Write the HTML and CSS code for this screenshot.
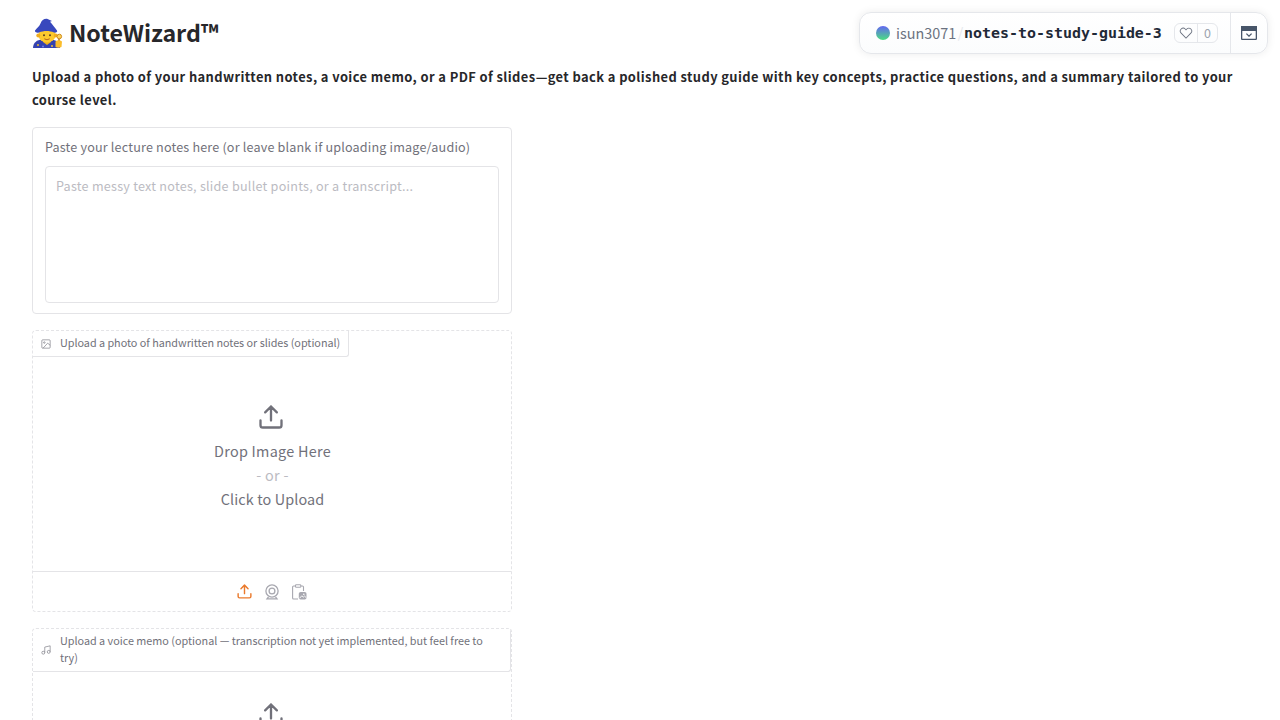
FILE: index.html
```
<!DOCTYPE html>
<html lang="en">
<head>
  <meta charset="utf-8">
  <title>NoteWizard</title>
  <link rel="stylesheet" href="styles.css">
</head>
<body>
  <svg width="0" height="0" class="defs">
    <symbol id="upload" viewBox="0 0 24 24">
      <path d="M21 15v4a2 2 0 0 1-2 2H5a2 2 0 0 1-2-2v-4M17 8l-5-5-5 5M12 3v12" fill="none" stroke="currentColor" stroke-width="2" stroke-linecap="round" stroke-linejoin="round"/>
    </symbol>
  </svg>

  <div class="space-bar">
    <div class="space-info">
      <span class="dot"></span>
      <span class="owner">isun3071</span>
      <span class="slash">/</span>
      <span class="repo">notes-to-study-guide-3</span>
      <div class="likes">
        <span class="heart">
          <svg width="14" height="14" viewBox="0 0 32 32" fill="#6b7280"><path d="M22.45,6a5.47,5.47,0,0,1,3.91,1.64,5.7,5.7,0,0,1,0,8L16,26.13,5.64,15.64a5.7,5.7,0,0,1,0-8,5.48,5.48,0,0,1,7.82,0L16,10.24l2.53-2.58A5.44,5.44,0,0,1,22.45,6m0-2a7.47,7.47,0,0,0-5.34,2.24L16,7.36,14.89,6.24a7.49,7.49,0,0,0-10.68,0,7.72,7.72,0,0,0,0,10.82L16,29,27.79,17.06a7.72,7.72,0,0,0,0-10.82A7.49,7.49,0,0,0,22.45,4Z"/></svg>
        </span>
        <span class="count">0</span>
      </div>
    </div>
    <div class="space-toggle">
      <svg width="16" height="14" viewBox="0 0 16 14">
        <rect x=".65" y=".65" width="14.7" height="12.7" rx=".6" fill="#fff" stroke="#475569" stroke-width="1.3"/>
        <path d="M0 0h16v5H0z" fill="#475569"/>
        <path d="M5.4 7.6L8 10.1l2.6-2.5" fill="none" stroke="#475569" stroke-width="1.3"/>
      </svg>
    </div>
  </div>

  <div class="app">
    <h1>
      <svg class="wizard" width="30" height="31" viewBox="0 0 30 31">
        <path d="M0 30c0-5 4-8.500 9-8.500h9c5 0 9 3.500 9 8.500z" fill="#3442b0"/>
        <circle cx="5" cy="27" r="1.1" fill="#e0b43c"/>
        <circle cx="10" cy="28.5" r="1" fill="#7684e0"/>
        <circle cx="19" cy="28" r="1.1" fill="#e0b43c"/>
        <path d="M10 20h8v4l-4 3-4-3z" fill="#eeb21c"/>
        <ellipse cx="14" cy="17" rx="8.6" ry="7.6" fill="#fdc92d"/>
        <circle cx="5.3" cy="17.5" r="2" fill="#f0ad1f"/>
        <circle cx="22.7" cy="17.5" r="2" fill="#f0ad1f"/>
        <circle cx="11" cy="17.3" r="1" fill="#5a4020"/>
        <circle cx="17" cy="17.3" r="1" fill="#5a4020"/>
        <path d="M11.3 20.8q2.7 2 5.4 0" fill="none" stroke="#b5651d" stroke-width="1"/>
        <path d="M2 12.5C4 9.500 6 9 7.500 5.500 8.500 2.500 11 .500 14 .800l5 2.200-2 .700c2 2 4.500 5.500 7 8.800 1 1.700-1.500 2.500-3 2-4.500-2-10.500-2-15 0-2 .600-4.500-.200-4-2z" fill="#3848bd"/>
        <path d="M26 20v5" stroke="#a3661e" stroke-width="1.400"/>
        <circle cx="26.300" cy="18.500" r="2.300" fill="#fbd35a" stroke="#d08a1c"/>
        <path d="M22.500 23.500q3-2.500 6.500 0l-.500 5.500q-3 1.500-6 0z" fill="#fbbd2b"/>
      </svg>
      <span>NoteWizard™</span>
    </h1>
    <p class="intro">Upload a photo of your handwritten notes, a voice memo, or a PDF of slides—get back a polished study guide with key concepts, practice questions, and a summary tailored to your<br>course level.</p>

    <div class="column">
      <div class="block text-block">
        <label for="notes">Paste your lecture notes here (or leave blank if uploading image/audio)</label>
        <textarea id="notes" placeholder="Paste messy text notes, slide bullet points, or a transcript..."></textarea>
      </div>

      <div class="block upload-block">
        <div class="block-label">
          <svg width="10" height="10" viewBox="0 0 24 24" fill="none" stroke="currentColor" stroke-width="1.5"><rect x="2" y="2" width="20" height="20" rx="2"/><circle cx="8" cy="8.500" r="1.800"/><path d="M22 15l-6-5L5 22"/></svg>
          <span>Upload a photo of handwritten notes or slides (optional)</span>
        </div>
        <div class="drop">
          <svg class="drop-icon" width="28" height="28"><use href="#upload"/></svg>
          <span>Drop Image Here</span>
          <span class="or">- or -</span>
          <span class="click">Click to Upload</span>
        </div>
        <div class="sources">
          <svg class="active" width="17" height="17"><use href="#upload"/></svg>
          <svg width="16" height="16" viewBox="0 0 16 16" fill="none" stroke="currentColor" stroke-width="1.300"><circle cx="8" cy="7" r="6.100"/><circle cx="8" cy="7" r="2.900"/><path d="M4.500 12.800L3 14.800h10l-1.500-2"/></svg>
          <svg width="16" height="16" viewBox="0 0 16 16" fill="none" stroke="currentColor" stroke-width="1.100"><path d="M7 15H2.600a1 1 0 0 1-1-1V3a1 1 0 0 1 1-1H4.500M9.800 2h1.700a1 1 0 0 1 1 1v4"/><rect x="4.500" y=".8" width="5.300" height="2.500" rx=".8"/><rect x="7.800" y="8" width="7.700" height="7.500" rx="1.800" fill="currentColor" stroke="none"/><path d="M8.500 14.300l2.300-2.500 1.500 1.300 1.200-1 1.800 1.600" stroke="#fff" stroke-width=".9"/><circle cx="12.800" cy="10.200" r=".8" fill="#fff" stroke="none"/></svg>
        </div>
      </div>

      <div class="block upload-block audio-block">
        <div class="block-label wide">
          <svg width="10" height="10" viewBox="0 0 24 24" fill="none" stroke="currentColor" stroke-width="1.500"><path d="M9 18V5l13-3v14"/><circle cx="5.500" cy="18.500" r="3.500"/><circle cx="18.500" cy="16.500" r="3.500"/></svg>
          <span>Upload a voice memo (optional — transcription not yet implemented, but feel free to<br>try)</span>
        </div>
        <div class="drop audio">
          <svg class="drop-icon" width="28" height="28"><use href="#upload"/></svg>
        </div>
      </div>
    </div>
  </div>
</body>
</html>
```

FILE: styles.css
```
* { box-sizing: border-box; }
html, body { height: 100%; }
body { margin: 0; background: #fff; color: #27272a; font-family: "Noto Sans CJK SC", "Noto Sans", sans-serif; overflow: hidden; }
.defs { position: absolute; }
svg { flex: none; }

.space-bar { position: absolute; top: 12px; right: 12px; width: 409px; height: 42px; display: flex; border: 1px solid #e5e7eb; border-radius: 12px; background: linear-gradient(#fff, #fbfcfd); box-shadow: 0 0 8px rgba(0,0,0,0.08); }
.space-info { flex: 1; display: flex; align-items: center; padding-left: 16px; white-space: nowrap; }
.dot { width: 14px; height: 14px; border-radius: 50%; background: linear-gradient(#6366f1, #4ade80); margin-right: 6px; }
.owner { width: 61px; padding-bottom: 2px; font-size: 14.4px; color: #6b7280; }
.slash { width: 7px; padding-bottom: 2px; font-size: 14px; color: #e5e7eb; text-align: center; }
.repo { width: 198px; font: bold 14.95px "DejaVu Sans Mono", monospace; color: #1f2937; }
.likes { display: flex; align-items: center; width: 44px; height: 20px; margin-left: 12px; border: 1px solid #e5e7eb; border-radius: 6px; }
.heart { display: flex; align-items: center; justify-content: center; width: 23px; height: 100%; border-right: 1px solid #e5e7eb; }
.count { flex: 1; padding-bottom: 2px; text-align: center; font-size: 12.5px; color: #9ca3af; }
.space-toggle { width: 37px; display: flex; align-items: center; justify-content: center; border-left: 1px solid #e5e7eb; }

.app { height: 100%; padding: 16px 32px 0; overflow: hidden; }
h1 { display: flex; align-items: center; gap: 6px; height: 34px; margin: 0; font-size: 23.2px; font-weight: 600; line-height: 34px; }
h1 span { padding-bottom: 2px; }
.wizard { margin-left: 1px; }
.intro { margin: 15px 0 17px; height: 45px; font-size: 12.9px; font-weight: bold; line-height: 23px; letter-spacing: 0.405px; white-space: nowrap; }

.column { width: 480px; display: flex; flex-direction: column; gap: 16px; }
.block { border: 1px solid #e4e4e7; border-radius: 4px; }
.text-block { height: 187px; padding: 8px 12px 10px; display: flex; flex-direction: column; }
.text-block label { height: 30px; font-size: 12.6px; line-height: 21px; letter-spacing: 0.175px; color: #71717a; white-space: nowrap; }
textarea { flex: 1; width: 454px; padding: 8px 10px; border: 1px solid #e4e4e7; border-radius: 4px; font: 12.6px/21px "Noto Sans CJK SC", "Noto Sans", sans-serif; letter-spacing: 0.245px; color: #27272a; resize: none; outline: none; }
textarea::placeholder { color: #bbbbc2; }

.upload-block { display: flex; flex-direction: column; align-items: flex-start; border-style: dashed; height: 282px; }
.audio-block { height: 92px; border-bottom: 0; border-radius: 4px 4px 0 0; overflow: hidden; }
.block-label { display: flex; align-items: center; gap: 9px; height: 26px; flex: none; padding: 0 8px; border: 1px solid #e4e4e7; border-width: 0 1px 1px 0; border-radius: 3px 0 3px 0; font-size: 10.8px; line-height: 17px; letter-spacing: -0.02px; color: #71717a; white-space: nowrap; }
.block-label span { padding-bottom: 2px; }
.block-label.wide { width: 478px; height: 43px; letter-spacing: 0; }
.drop { width: 100%; flex: 1; display: flex; flex-direction: column; align-items: center; padding: 46px 0 0 1px; font-size: 14.4px; line-height: 24px; letter-spacing: 0.27px; color: #71717a; }
.drop.audio { padding-top: 29px; }
.drop-icon { margin: 0 4px 8px 0; }
.click { letter-spacing: 0.13px; }
.or { color: #bbbbc2; }
.sources { width: 100%; height: 40px; display: flex; align-items: center; justify-content: center; gap: 11px; padding-right: 1px; border-top: 1px solid #e4e4e7; color: #a8a8b0; }
.sources .active { color: #ea7a2c; }
```
